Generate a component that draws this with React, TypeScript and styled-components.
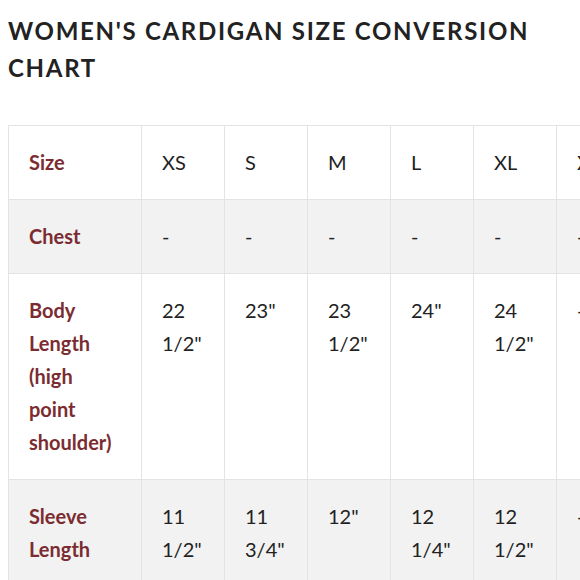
import React from "react";
import styled, { createGlobalStyle } from "styled-components";

const LABEL_WIDTH = 133;
const CELL_WIDTH = 83;

const GlobalStyle = createGlobalStyle`
  html, body {
    margin: 0;
    padding: 0;
    background: #fff;
    overflow: hidden;
  }
`;

const SIZES = ["XS", "S", "M", "L", "XL", "XXL"];

const ROWS: { label: string; values: string[] }[] = [
  { label: "Chest", values: ["-", "-", "-", "-", "-", "-"] },
  {
    label: "Body Length (high point shoulder)",
    values: ['22 1/2"', '23"', '23 1/2"', '24"', '24 1/2"', "-"],
  },
  {
    label: "Sleeve Length",
    values: ['11 1/2"', '11 3/4"', '12"', '12 1/4"', '12 1/2"', "-"],
  },
];

const Page = styled.div`
  width: 580px;
  height: 580px;
  overflow: hidden;
  padding: 12px 8px 0;
  box-sizing: border-box;
  font-family: Lato, "Open Sans", sans-serif;
`;

const Title = styled.h2`
  margin: 0 0 39px;
  font-size: 24px;
  line-height: 37px;
  font-weight: 700;
  letter-spacing: 1.7px;
  color: #222;
  text-transform: uppercase;
  max-width: 550px;
`;

const Table = styled.table`
  border-collapse: collapse;
  table-layout: fixed;
  width: ${LABEL_WIDTH + CELL_WIDTH * SIZES.length}px;
  border: 1px solid #e3e3e3;
`;

const Row = styled.tr<{ shaded?: boolean }>`
  background: ${({ shaded }) => (shaded ? "#f2f2f2" : "#fff")};
`;

const Cell = styled.td<{ label?: boolean }>`
  width: ${({ label }) => (label ? LABEL_WIDTH : CELL_WIDTH)}px;
  box-sizing: border-box;
  padding: 20px;
  border: 1px solid #e3e3e3;
  vertical-align: top;
  font-size: 20px;
  line-height: 33px;
  font-weight: ${({ label }) => (label ? 700 : 400)};
  color: ${({ label }) => (label ? "#7b2c31" : "#222")};
  word-wrap: break-word;
`;

export default function App() {
  return (
    <Page>
      <GlobalStyle />
      <Title>Women's Cardigan Size Conversion Chart</Title>
      <Table>
        <tbody>
          <Row>
            <Cell label>Size</Cell>
            {SIZES.map((size) => (
              <Cell key={size}>{size}</Cell>
            ))}
          </Row>
          {ROWS.map((row, idx) => (
            <Row key={row.label} shaded={idx % 2 === 0}>
              <Cell label>{row.label}</Cell>
              {row.values.map((value, i) => (
                <Cell key={`${row.label}-${i}`}>{value}</Cell>
              ))}
            </Row>
          ))}
        </tbody>
      </Table>
    </Page>
  );
}
